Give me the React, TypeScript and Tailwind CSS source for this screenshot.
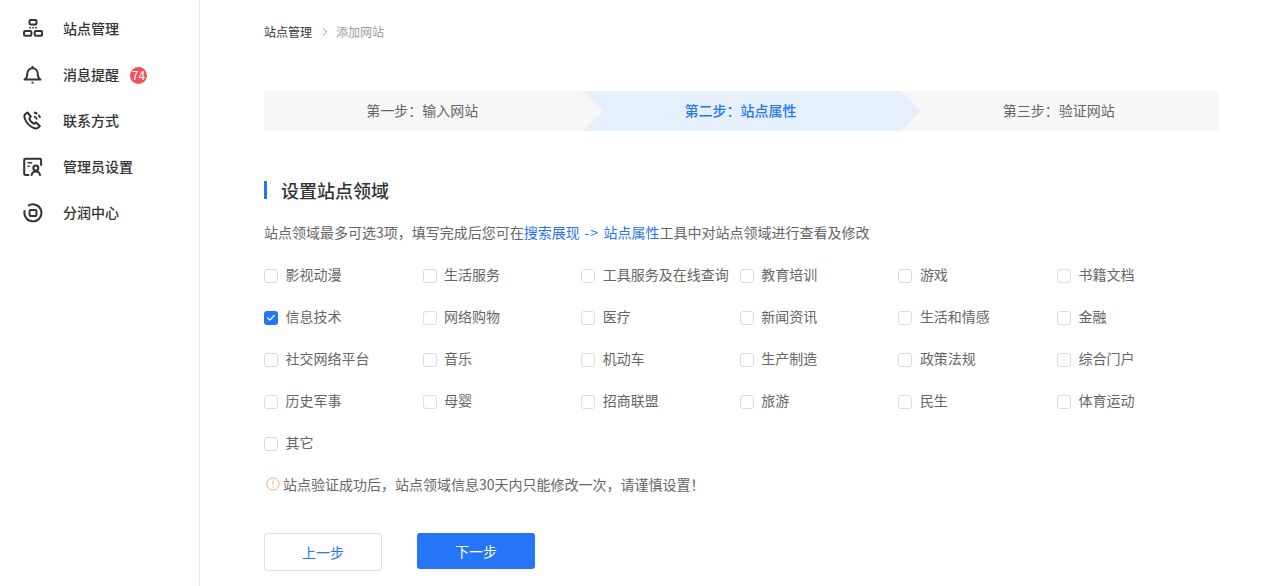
import { Check, ChevronRight } from 'lucide-react';

const FONT = "font-['Noto_Sans_CJK_SC','Noto_Sans',sans-serif]";

const NAV = [
  { label: '站点管理', icon: <SiteIcon /> },
  { label: '消息提醒', icon: <BellIcon />, badge: 74 },
  { label: '联系方式', icon: <PhoneIcon /> },
  { label: '管理员设置', icon: <AdminIcon /> },
  { label: '分润中心', icon: <ShareIcon /> },
];

const STEPS = ['第一步：输入网站', '第二步：站点属性', '第三步：验证网站'];

const FIELDS = [
  '影视动漫', '生活服务', '工具服务及在线查询', '教育培训', '游戏', '书籍文档',
  '信息技术', '网络购物', '医疗', '新闻资讯', '生活和情感', '金融',
  '社交网络平台', '音乐', '机动车', '生产制造', '政策法规', '综合门户',
  '历史军事', '母婴', '招商联盟', '旅游', '民生', '体育运动',
  '其它',
];

function SiteIcon() {
  return (
    <svg viewBox="0 0 20 20" className="h-5 w-5" fill="none" stroke="#333" strokeWidth="2">
      <rect x="6.500" y="1" width="7" height="4.600" rx="1" />
      <rect x="1" y="12" width="7.400" height="4.800" rx="1.200" />
      <rect x="11.700" y="12" width="7.400" height="4.800" rx="1.200" />
      <path d="M6.200 8.800h1.600M9.200 8.800h1.600M12.200 8.800h1.600" strokeWidth="1.500" />
    </svg>
  );
}

function BellIcon() {
  return (
    <svg viewBox="0 0 20 20" className="h-5 w-5" fill="none" stroke="#333" strokeWidth="2">
      <path d="M1.500 14.600c2-1 2.700-2.500 2.700-5.500 0-3.500 2.300-5.900 5.300-5.900s5.300 2.400 5.300 5.900c0 3 .7 4.500 2.700 5.500z" strokeLinejoin="round" />
      <path d="M9.500 1v2.200M9.500 16.800v1.700" />
    </svg>
  );
}

function PhoneIcon() {
  return (
    <svg viewBox="0 0 20 20" className="h-5 w-5" fill="none" stroke="#333" strokeWidth="2">
      <path d="M4.400 1.500 2.300 3C1 4.200 1.200 6 2 8c1.500 3.600 4.500 7 8 8.700 2 .9 3.800 1 5 .1l1.800-1.800-3.800-3.600-2 1.400C9.300 12 6.800 9.300 6.300 7.500l1.500-2z" strokeLinejoin="round" />
      <path d="M11 1.500c3.400.6 5.800 3 6.500 6.500" strokeDasharray="3.500 1.500" />
      <path d="M10.800 5.400c1.600.4 2.700 1.500 3.200 3" />
    </svg>
  );
}

function AdminIcon() {
  return (
    <svg viewBox="0 0 20 20" className="h-5 w-5" fill="none" stroke="#333" strokeWidth="2">
      <path d="M6.200 18H2.400A1.200 1.200 0 0 1 1.200 16.800V3A1.200 1.200 0 0 1 2.400 1.800h14.500A1.200 1.200 0 0 1 18.100 3v5.800" />
      <path d="M4.500 5.800h4.700M4.500 9.300h2.200" strokeWidth="1.600" />
      <circle cx="12.800" cy="11" r="2.500" />
      <path d="M8.400 18.800c.4-2.700 2.100-4.300 4.400-4.300s4 1.600 4.400 4.300" />
    </svg>
  );
}

function ShareIcon() {
  return (
    <svg viewBox="0 0 20 20" className="h-5 w-5" fill="none" stroke="#333" strokeWidth="2">
      <path d="M5 2.900A8.500 8.500 0 1 1 1.800 7.300" />
      <rect x="6.600" y="6.900" width="6.800" height="6.200" rx="1" />
    </svg>
  );
}

function FieldOption({ label, checked }: { label: string; checked?: boolean }) {
  return (
    <label className="flex h-[42px] w-[158.6px] items-center gap-[7.5px] whitespace-nowrap text-sm text-[#666]">
      <span
        className={
          checked
            ? 'mt-1 flex h-3.5 w-3.5 items-center justify-center rounded-[3px] bg-[#2575f6]'
            : 'mt-1 h-3.5 w-3.5 rounded-[3px] border border-[#dcdcdc] bg-white'
        }
      >
        {checked && <Check className="h-2.5 w-2.5 text-white" strokeWidth={3} />}
      </span>
      {label}
    </label>
  );
}

export default function App() {
  return (
    <div className={`flex h-[586px] w-[1263px] overflow-hidden bg-white ${FONT}`}>
      <aside className="w-[200px] shrink-0 border-r border-[#e8e8e8] pt-[5px]">
        {NAV.map((item) => (
          <div key={item.label} className="flex h-[46px] items-center pl-[23px]">
            <span className="mt-0.5 flex w-10">{item.icon}</span>
            <span className="text-sm font-medium text-[#333]">{item.label}</span>
            {item.badge && (
              <span className="ml-[11px] mt-0.5 flex h-[17px] w-[17px] items-center justify-center rounded-full bg-[#f4505a] text-xs text-white">
                {item.badge}
              </span>
            )}
          </div>
        ))}
      </aside>

      <main className="box-content w-[955px] pl-16">
        <nav className="flex h-[64px] items-center text-xs">
          <span className="text-[#333]">站点管理</span>
          <ChevronRight className="ml-1.5 mr-1 h-3.5 w-3.5 text-[#888]" strokeWidth={1.5} />
          <span className="text-[#999]">添加网站</span>
        </nav>

        <div className="mt-[27px] flex h-10 bg-[#f7f7f7] text-sm">
          {STEPS.map((step, i) => (
            <div
              key={step}
              className={
                i === 1
                  ? 'relative flex flex-1 items-center justify-center bg-[#e5f0fc] pb-0.5 pr-0.5 font-medium text-[#2575f6]'
                  : 'relative flex flex-1 items-center justify-center pb-0.5 pr-0.5 text-[#666]'
              }
            >
              {step}
              {i === 0 && (
                <span className="absolute left-full top-0 z-10 h-10 w-[21px] bg-[#f7f7f7] [clip-path:polygon(0_0,100%_50%,0_100%)]" />
              )}
              {i === 1 && (
                <span className="absolute left-full top-0 z-10 h-10 w-5 bg-[#e5f0fc] [clip-path:polygon(0_0,100%_50%,0_100%)]" />
              )}
            </div>
          ))}
        </div>

        <h2 className="mt-[50px] flex h-[18px] items-center border-l-[3px] border-[#2575f6] pl-[14px] text-lg font-medium text-[#333]">
          设置站点领域
        </h2>

        <p className="mt-[23px] h-[21px] text-sm leading-[21px] text-[#666]">
          站点领域最多可选3项，填写完成后您可在
          <span className="text-[#2575f6]">
            搜索展现<span className="mx-[4.5px] tracking-[1px]">-&gt;</span>站点属性
          </span>
          工具中对站点领域进行查看及修改
        </p>

        <div className="mt-2.5 flex flex-wrap">
          {FIELDS.map((field) => (
            <FieldOption key={field} label={field} checked={field === '信息技术'} />
          ))}
        </div>

        <p className="mt-[10px] flex h-[21px] items-center text-sm text-[#666]">
          <svg viewBox="0 0 16 16" className="ml-0.5 mr-[3px] h-[14px] w-[14px]" fill="none" stroke="#f5a76b" strokeWidth="1.100">
            <circle cx="8" cy="8" r="7" />
            <path d="M8 4v5M8 11v1.200" />
          </svg>
          站点验证成功后，站点领域信息30天内只能修改一次，请谨慎设置！
        </p>

        <div className="mt-[39px] flex gap-[35px] text-sm">
          <button type="button" className="h-[38px] w-[118px] rounded-[3px] border border-[#e0e0e0] bg-white text-[#2575f6]">
            上一步
          </button>
          <button type="button" className="h-9 w-[118px] rounded-[3px] bg-[#2575f6] text-white">
            下一步
          </button>
        </div>
      </main>
    </div>
  );
}
